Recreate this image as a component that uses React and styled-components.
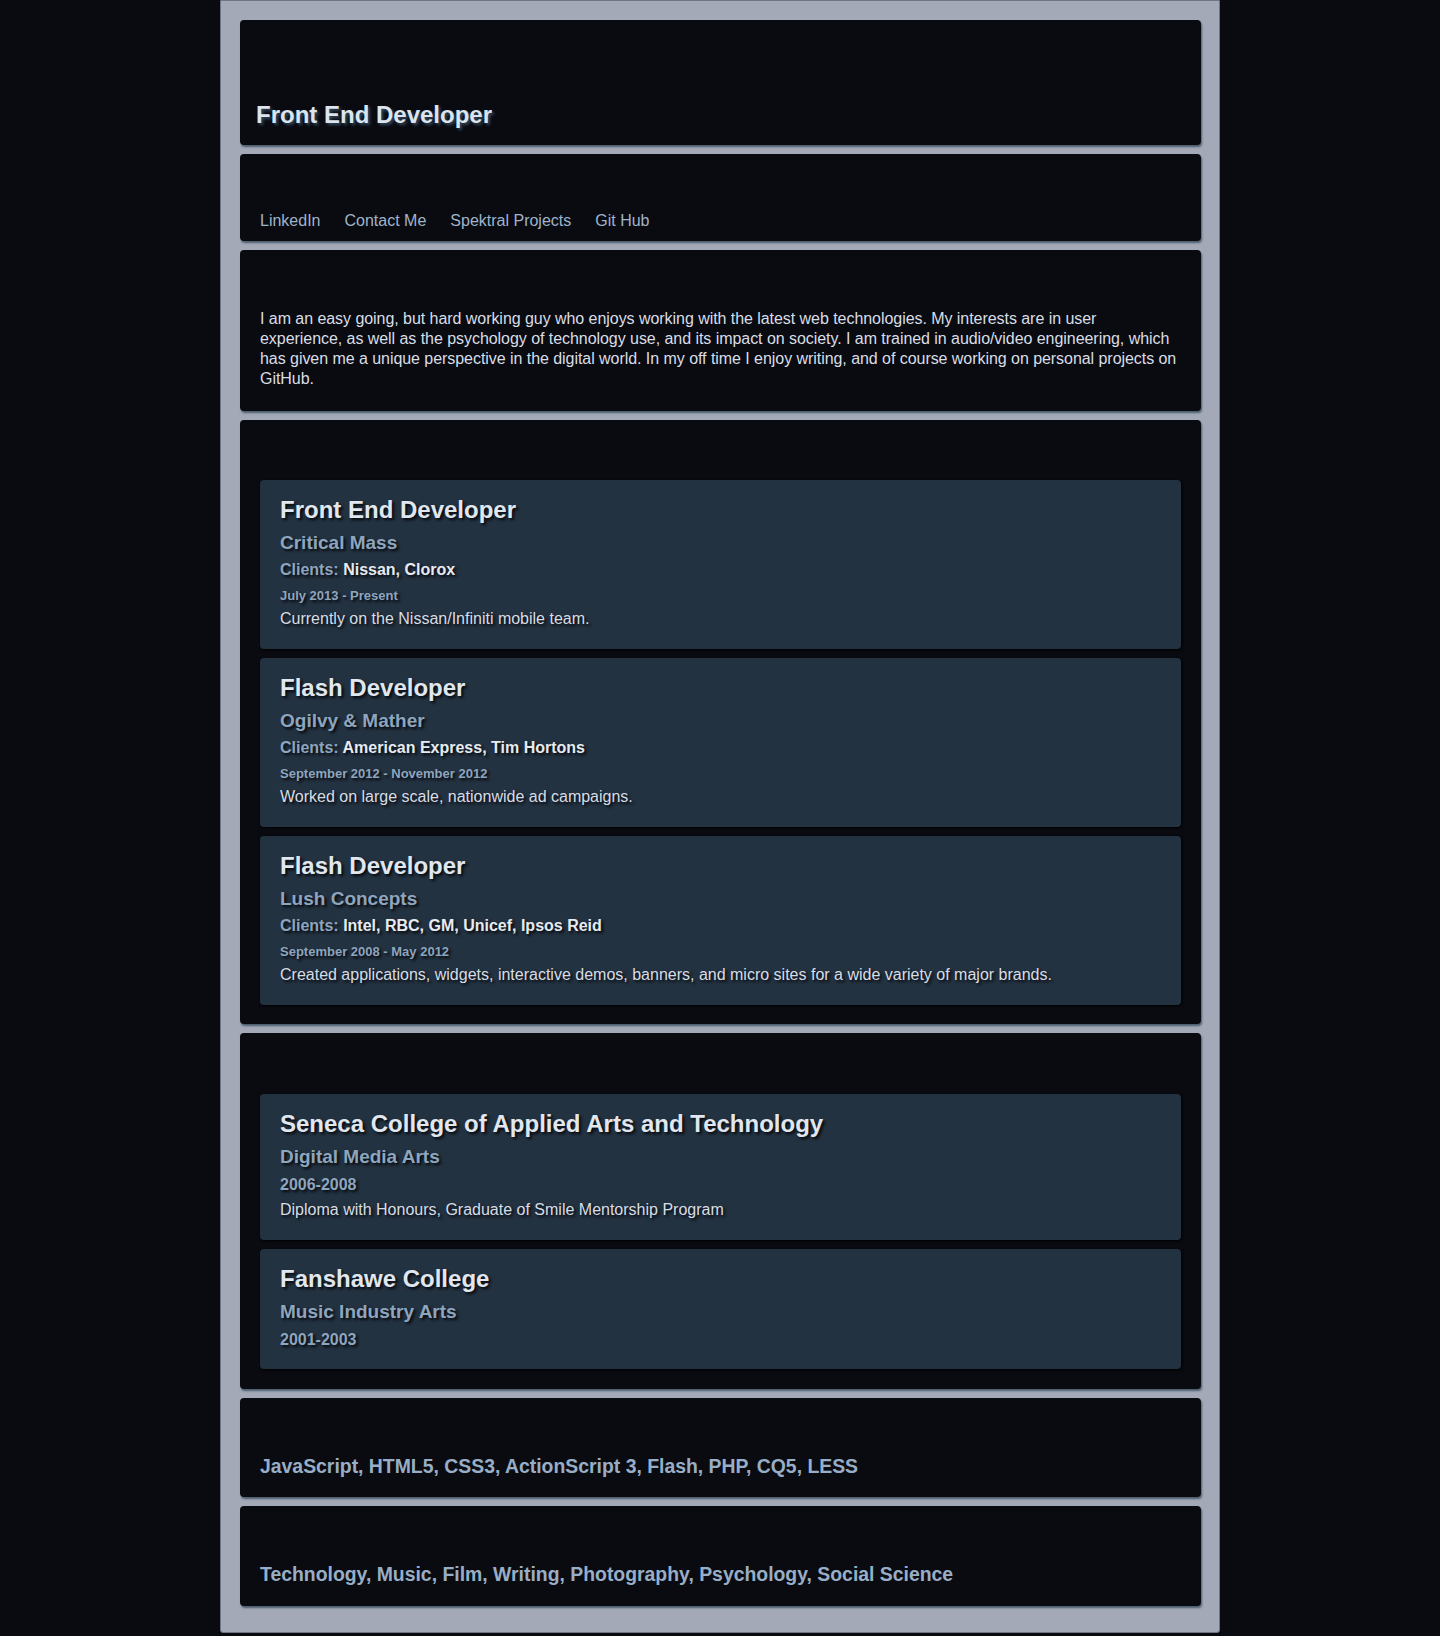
import React from 'react'
import styled, { createGlobalStyle } from 'styled-components'

const GlobalStyle = createGlobalStyle`
  body {
    margin: 0;
    background: #0a0b11;
    font-family: "Liberation Sans", Arial, Helvetica, sans-serif;
  }
`

const Wrapper = styled.div`
  box-sizing: border-box;
  width: 1000px;
  margin: 0 auto;
  padding: 19px 18px 26px 19px;
  background: #a3a9b6;
  border: 1px solid #6e7584;
  border-radius: 0 0 3px 3px;
  display: flex;
  flex-direction: column;
  gap: 9px;
`

const Panel = styled.section`
  background: #0a0b11;
  border-radius: 4px;
  box-shadow: 1px 2px 2px #4b5d70;
  padding: ${p => p.$top}px ${p => p.$side || 20}px ${p => p.$bottom}px;
`

const Title = styled.h1`
  margin: 0;
  font-size: 24px;
  line-height: 28px;
  font-weight: bold;
  color: #dce4ee;
  text-shadow: 2px 2px 3px #34495e;
`

const Nav = styled.nav`
  display: flex;
  gap: 24px;
`

const NavLink = styled.a`
  font-size: 16px;
  line-height: 18px;
  color: #9fb4ca;
  text-decoration: none;
`

const About = styled.p`
  margin: 0;
  font-size: 16px;
  line-height: 20px;
  letter-spacing: -0.05px;
  color: #d9dee6;
`

const CardList = styled.div`
  display: flex;
  flex-direction: column;
  gap: 9px;
`

const Card = styled.article`
  background: #233241;
  border-radius: 4px;
  box-shadow: 1px 1px 3px #000;
  padding: 16px 20px ${p => p.$bottom || 20}px;
  text-shadow: 2px 2px 3px #05060a;
`

const CardTitle = styled.h2`
  margin: 0;
  font-size: 24px;
  line-height: 28px;
  font-weight: bold;
  color: #e0e7ef;
`

const Company = styled.h3`
  margin: 7px 0 0;
  font-size: 19px;
  line-height: 24px;
  font-weight: bold;
  color: #8ea5be;
`

const Clients = styled.div`
  margin-top: 5px;
  font-size: 16px;
  line-height: 20px;
  font-weight: bold;
  color: #e6ebf1;
  span {
    color: #8ea5be;
  }
`

const Dates = styled.div`
  margin-top: ${p => (p.$big ? 6 : 8)}px;
  font-size: ${p => (p.$big ? 16 : 13)}px;
  line-height: ${p => (p.$big ? 20 : 16)}px;
  font-weight: bold;
  color: #8ea5be;
`

const Desc = styled.p`
  margin: 5px 0 0;
  font-size: 16px;
  line-height: 20px;
  color: #d7dde5;
`

const Tags = styled.p`
  margin: 0;
  font-size: 19.4px;
  line-height: 22px;
  font-weight: bold;
  color: #98aec6;
`

const jobs = [
  {
    title: 'Front End Developer',
    company: 'Critical Mass',
    clients: 'Nissan, Clorox',
    dates: 'July 2013 - Present',
    desc: 'Currently on the Nissan/Infiniti mobile team.',
  },
  {
    title: 'Flash Developer',
    company: 'Ogilvy & Mather',
    clients: 'American Express, Tim Hortons',
    dates: 'September 2012 - November 2012',
    desc: 'Worked on large scale, nationwide ad campaigns.',
  },
  {
    title: 'Flash Developer',
    company: 'Lush Concepts',
    clients: 'Intel, RBC, GM, Unicef, Ipsos Reid',
    dates: 'September 2008 - May 2012',
    desc: 'Created applications, widgets, interactive demos, banners, and micro sites for a wide variety of major brands.',
  },
]

const schools = [
  {
    name: 'Seneca College of Applied Arts and Technology',
    program: 'Digital Media Arts',
    years: '2006-2008',
    desc: 'Diploma with Honours, Graduate of Smile Mentorship Program',
  },
  {
    name: 'Fanshawe College',
    program: 'Music Industry Arts',
    years: '2001-2003',
  },
]

export default function App() {
  return (
    <>
      <GlobalStyle />
      <Wrapper>
        <Panel $top={81} $bottom={16} $side={16}>
          <Title>Front End Developer</Title>
        </Panel>

        <Panel $top={58} $bottom={11}>
          <Nav>
            <NavLink href="#">LinkedIn</NavLink>
            <NavLink href="#">Contact Me</NavLink>
            <NavLink href="#">Spektral Projects</NavLink>
            <NavLink href="#">Git Hub</NavLink>
          </Nav>
        </Panel>

        <Panel $top={59} $bottom={22}>
          <About>
            I am an easy going, but hard working guy who enjoys working with the latest web technologies. My interests are in user
            experience, as well as the psychology of technology use, and its impact on society. I am trained in audio/video engineering, which
            has given me a unique perspective in the digital world. In my off time I enjoy writing, and of course working on personal projects on
            GitHub.
          </About>
        </Panel>

        <Panel $top={60} $bottom={19}>
          <CardList>
            {jobs.map((job, i) => (
              <Card key={i}>
                <CardTitle>{job.title}</CardTitle>
                <Company>{job.company}</Company>
                <Clients>
                  <span>Clients:</span> {job.clients}
                </Clients>
                <Dates>{job.dates}</Dates>
                <Desc>{job.desc}</Desc>
              </Card>
            ))}
          </CardList>
        </Panel>

        <Panel $top={61} $bottom={20}>
          <CardList>
            {schools.map((s, i) => (
              <Card key={i} $bottom={s.desc ? 20 : 19}>
                <CardTitle>{s.name}</CardTitle>
                <Company>{s.program}</Company>
                <Dates $big>{s.years}</Dates>
                {s.desc && <Desc>{s.desc}</Desc>}
              </Card>
            ))}
          </CardList>
        </Panel>

        <Panel $top={57} $bottom={20}>
          <Tags>JavaScript, HTML5, CSS3, ActionScript 3, Flash, PHP, CQ5, LESS</Tags>
        </Panel>

        <Panel $top={57} $bottom={21}>
          <Tags>Technology, Music, Film, Writing, Photography, Psychology, Social Science</Tags>
        </Panel>
      </Wrapper>
    </>
  )
}
